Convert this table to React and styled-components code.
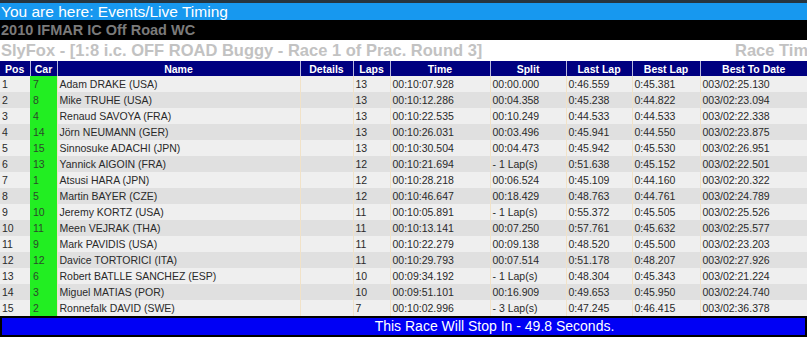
import React from "react";
import styled, { createGlobalStyle } from "styled-components";

const Global = createGlobalStyle`
  html, body { margin: 0; padding: 0; background: #ffffff; }
  body { overflow: hidden; font-family: "Liberation Sans", Arial, sans-serif; }
`;

const Page = styled.div`
  width: 807px;
  overflow: hidden;
  display: flex;
  flex-direction: column;
`;

const TopStrip = styled.div`
  height: 3px;
  background: #26343f;
`;

const Crumb = styled.div`
  height: 17px;
  line-height: 18px;
  background: #1798ef;
  color: #ffffff;
  font-size: 15.5px;
  padding-left: 1px;
  white-space: nowrap;
  overflow: hidden;
`;

const EventBar = styled.div`
  height: 20px;
  line-height: 21px;
  background: #000000;
  color: #7b7b7b;
  font-size: 14.5px;
  font-weight: bold;
  padding-left: 1px;
  white-space: nowrap;
`;

const RaceBar = styled.div`
  height: 20px;
  line-height: 21px;
  background: #ffffff;
  color: #c2c2c2;
  font-size: 16.5px;
  font-weight: bold;
  display: flex;
  justify-content: space-between;
  padding-left: 1px;
  white-space: nowrap;
  margin-bottom: 1px;
`;

const RaceTime = styled.span`
  flex: 0 0 72px;
  overflow: hidden;
`;

const Table = styled.table`
  width: 807px;
  table-layout: fixed;
  border-collapse: collapse;
  font-size: 10.5px;
  color: #2a2a2a;
`;

const HeadCell = styled.th`
  height: 15px;
  padding: 0;
  background: #000080;
  color: #ffffff;
  font-size: 10.5px;
  font-weight: bold;
  text-align: center;
  border-left: 1px solid #b9b9df;
  &:first-child { border-left: none; }
`;

const Row = styled.tr`
  background: ${(p) => (p.$alt ? "#e0e0e0" : "#efefef")};
`;

const Cell = styled.td`
  height: 16px;
  padding: 0 0 0 2px;
  white-space: nowrap;
  overflow: hidden;
  border-left: 1px solid #f1e2c8;
  &:first-child { border-left: none; }
`;

const CarCell = styled(Cell)`
  background: #22ee22;
  color: #2c4a2c;
  padding-left: 3px;
  border-left: none;
`;

const StopBar = styled.div`
  height: 17px;
  line-height: 17px;
  border: 2px solid #000000;
  background: #0000f5;
  color: #ffffff;
  font-size: 14px;
  text-align: center;
  padding-left: 182px;
  white-space: nowrap;
`;

const cols = [30, 27, 243, 53, 37, 100, 76, 66, 68, 107];
const heads = ["Pos", "Car", "Name", "Details", "Laps", "Time", "Split", "Last Lap", "Best Lap", "Best To Date"];

const rows = [
  [1, 7, "Adam DRAKE (USA)", 13, "00:10:07.928", "00:00.000", "0:46.559", "0:45.381", "003/02:25.130"],
  [2, 8, "Mike TRUHE (USA)", 13, "00:10:12.286", "00:04.358", "0:45.238", "0:44.822", "003/02:23.094"],
  [3, 4, "Renaud SAVOYA (FRA)", 13, "00:10:22.535", "00:10.249", "0:44.533", "0:44.533", "003/02:22.338"],
  [4, 14, "Jörn NEUMANN (GER)", 13, "00:10:26.031", "00:03.496", "0:45.941", "0:44.550", "003/02:23.875"],
  [5, 15, "Sinnosuke ADACHI (JPN)", 13, "00:10:30.504", "00:04.473", "0:45.942", "0:45.530", "003/02:26.951"],
  [6, 13, "Yannick AIGOIN (FRA)", 12, "00:10:21.694", "- 1 Lap(s)", "0:51.638", "0:45.152", "003/02:22.501"],
  [7, 1, "Atsusi HARA (JPN)", 12, "00:10:28.218", "00:06.524", "0:45.109", "0:44.160", "003/02:20.322"],
  [8, 5, "Martin BAYER (CZE)", 12, "00:10:46.647", "00:18.429", "0:48.763", "0:44.761", "003/02:24.789"],
  [9, 10, "Jeremy KORTZ (USA)", 11, "00:10:05.891", "- 1 Lap(s)", "0:55.372", "0:45.505", "003/02:25.526"],
  [10, 11, "Meen VEJRAK (THA)", 11, "00:10:13.141", "00:07.250", "0:57.761", "0:45.632", "003/02:25.577"],
  [11, 9, "Mark PAVIDIS (USA)", 11, "00:10:22.279", "00:09.138", "0:48.520", "0:45.500", "003/02:23.203"],
  [12, 12, "Davice TORTORICI (ITA)", 11, "00:10:29.793", "00:07.514", "0:51.178", "0:48.207", "003/02:27.926"],
  [13, 6, "Robert BATLLE SANCHEZ (ESP)", 10, "00:09:34.192", "- 1 Lap(s)", "0:48.304", "0:45.343", "003/02:21.224"],
  [14, 3, "Miguel MATIAS (POR)", 10, "00:09:51.101", "00:16.909", "0:49.653", "0:45.950", "003/02:24.740"],
  [15, 2, "Ronnefalk DAVID (SWE)", 7, "00:10:02.996", "- 3 Lap(s)", "0:47.245", "0:46.415", "003/02:36.378"],
];

export default function App() {
  return (
    <Page>
      <Global />
      <TopStrip />
      <Crumb>You are here: Events/Live Timing</Crumb>
      <EventBar>2010 IFMAR IC Off Road WC</EventBar>
      <RaceBar>
        <span>SlyFox - [1:8 i.c. OFF ROAD Buggy - Race 1 of Prac. Round 3]</span>
        <RaceTime>Race Time</RaceTime>
      </RaceBar>
      <Table>
        <colgroup>
          {cols.map((w, i) => (
            <col key={i} style={{ width: w }} />
          ))}
        </colgroup>
        <thead>
          <tr>
            {heads.map((h) => (
              <HeadCell key={h}>{h}</HeadCell>
            ))}
          </tr>
        </thead>
        <tbody>
          {rows.map((r, i) => (
            <Row key={r[0]} $alt={i % 2 === 1}>
              <Cell>{r[0]}</Cell>
              <CarCell>{r[1]}</CarCell>
              <Cell>{r[2]}</Cell>
              <Cell></Cell>
              <Cell>{r[3]}</Cell>
              <Cell>{r[4]}</Cell>
              <Cell>{r[5]}</Cell>
              <Cell>{r[6]}</Cell>
              <Cell>{r[7]}</Cell>
              <Cell>{r[8]}</Cell>
            </Row>
          ))}
        </tbody>
      </Table>
      <StopBar>This Race Will Stop In - 49.8 Seconds.</StopBar>
    </Page>
  );
}
